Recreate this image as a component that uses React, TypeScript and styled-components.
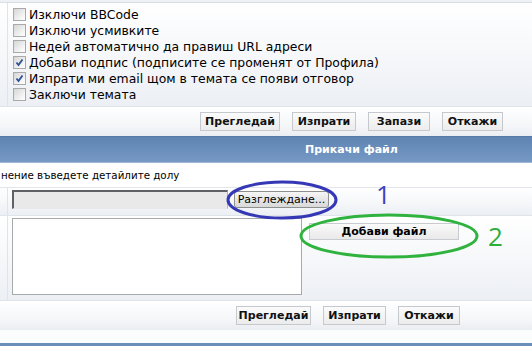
import React from 'react';
import styled, { createGlobalStyle } from 'styled-components';

const GlobalStyle = createGlobalStyle`
  html, body {
    margin: 0;
    padding: 0;
    background: #ffffff;
    overflow: hidden;
  }
  body {
    font-family: Verdana, "DejaVu Sans", sans-serif;
  }
`;

const Page = styled.div`
  position: relative;
  width: 532px;
  height: 346px;
  overflow: hidden;
  display: flex;
  flex-direction: column;
  background: #ffffff;
`;

const TopStrip = styled.div`
  height: 2px;
  background: #eef1f5;
  border-bottom: 1px solid #d9dee6;
`;

const Row = styled.div<{ $height: number }>`
  display: flex;
  height: ${(p) => p.$height}px;
  border-bottom: 1px solid #dfe4ea;
  background: linear-gradient(180deg, #ffffff 0%, #f4f6f9 60%, #eceff4 100%);
`;

const LeftCell = styled.div`
  width: 7px;
  flex: none;
  border-right: 1px solid #dfe4ea;
`;

const OptionsCell = styled.div`
  flex: 1;
  padding: 3px 0 0 5px;
  display: flex;
  flex-direction: column;
`;

const Option = styled.label`
  display: flex;
  align-items: center;
  height: 16px;
  font-size: 12.4px;
  color: #000;
  gap: 3px;
  white-space: nowrap;
`;

const Box = styled.span`
  width: 11px;
  height: 11px;
  flex: none;
  border: 1px solid #a9a9a9;
  background: linear-gradient(135deg, #d6d6d6 0%, #f4f4f4 70%, #ffffff 100%);
  display: flex;
  align-items: center;
  justify-content: center;
`;

const ButtonBar = styled.div<{ $height: number; $gap: number; $right: number }>`
  height: ${(p) => p.$height}px;
  display: flex;
  align-items: center;
  justify-content: flex-end;
  gap: ${(p) => p.$gap}px;
  padding-right: ${(p) => p.$right}px;
  background: linear-gradient(180deg, #ffffff 0%, #f3f5f8 70%, #eaedf1 100%);
`;

const Button = styled.button<{ $width: number }>`
  width: ${(p) => p.$width}px;
  height: 19px;
  padding: 0;
  border: 1px solid #c5c9ce;
  background: linear-gradient(180deg, #fbfbfb 0%, #ececec 100%);
  font-family: Verdana, "DejaVu Sans", sans-serif;
  font-size: 11px;
  font-weight: bold;
  color: #111;
`;

const Header = styled.div`
  height: 25px;
  border-top: 1px solid #557aa8;
  border-bottom: 1px solid #9fb8d6;
  background: linear-gradient(180deg, #5f83b2 0%, #6b8fbd 50%, #7598c4 100%);
  display: flex;
  align-items: center;
  padding-left: 305px;
  color: #ffffff;
  font-size: 11px;
  font-weight: bold;
`;

const Hint = styled.div`
  height: 24px;
  display: flex;
  align-items: center;
  padding-left: 1px;
  font-size: 10.3px;
  color: #000;
  border-bottom: 1px solid #e3e7ec;
  background: #ffffff;
`;

const FieldCell = styled.div`
  flex: 1;
  display: flex;
  align-items: flex-start;
  padding: 2px 0 0 4px;
`;

const FileBox = styled.div`
  width: 213px;
  height: 16px;
  border-top: 2px solid #5e6266;
  border-left: 2px solid #5e6266;
  border-right: 1px solid #b6b6b6;
  border-bottom: 1px solid #e8e8e8;
  background: #e9e9e9;
`;

const BrowseButton = styled.button`
  margin: 1px 0 0 6px;
  width: 95px;
  height: 17px;
  padding: 0;
  border: 1px solid #8e8f8f;
  border-radius: 3px;
  background: linear-gradient(180deg, #f6f6f6 0%, #e6e6e6 50%, #d9d9d9 100%);
  font-family: Verdana, "DejaVu Sans", sans-serif;
  font-size: 11px;
  color: #000;
`;

const ListBox = styled.div`
  width: 288px;
  height: 75px;
  border: 1px solid #a7aaad;
  background: #ffffff;
`;

const AddButton = styled.button`
  margin: 5px 0 0 7px;
  width: 150px;
  height: 17px;
  padding: 0;
  border: 1px solid #c8cbcf;
  background: linear-gradient(180deg, #fafafa 0%, #e9e9e9 100%);
  font-family: Verdana, "DejaVu Sans", sans-serif;
  font-size: 11px;
  font-weight: bold;
  color: #000;
`;

const Footer = styled.div`
  flex: 1;
  background: #fbfcfd;
  border-bottom: 3px solid #6b8ebb;
`;

const Overlay = styled.svg`
  position: absolute;
  left: 0;
  top: 0;
  pointer-events: none;
`;

const Mark = styled.span<{ $x: number; $y: number; $color: string }>`
  position: absolute;
  left: ${(p) => p.$x}px;
  top: ${(p) => p.$y}px;
  color: ${(p) => p.$color};
  font-family: "Open Sans", "DejaVu Sans", sans-serif;
  font-size: 26px;
  line-height: 1;
`;

const Check = () => (
  <svg width="9" height="9" viewBox="0 0 9 9">
    <path d="M1.5 4.5 L3.5 7 L7.5 1.5" fill="none" stroke="#2a4f96" strokeWidth="1.8" />
  </svg>
);

const options = [
  { text: 'Изключи BBCode', checked: false },
  { text: 'Изключи усмивките', checked: false },
  { text: 'Недей автоматично да правиш URL адреси', checked: false },
  { text: 'Добави подпис (подписите се променят от Профила)', checked: true },
  { text: 'Изпрати ми email щом в темата се появи отговор', checked: true },
  { text: 'Заключи темата', checked: false },
];

export default function App() {
  return (
    <>
      <GlobalStyle />
      <Page>
        <TopStrip />
        <Row $height={103}>
          <LeftCell />
          <OptionsCell>
            {options.map((o) => (
              <Option key={o.text}>
                <Box>{o.checked && <Check />}</Box>
                {o.text}
              </Option>
            ))}
          </OptionsCell>
        </Row>
        <ButtonBar $height={29} $gap={12} $right={29}>
          <Button $width={80}>Прегледай</Button>
          <Button $width={64}>Изпрати</Button>
          <Button $width={62}>Запази</Button>
          <Button $width={61}>Откажи</Button>
        </ButtonBar>
        <Header>Прикачи файл</Header>
        <Hint>нение въведете детайлите долу</Hint>
        <Row $height={27}>
          <LeftCell />
          <FieldCell>
            <FileBox />
            <BrowseButton>Разглеждане...</BrowseButton>
          </FieldCell>
        </Row>
        <Row $height={84}>
          <LeftCell />
          <FieldCell>
            <ListBox />
            <AddButton>Добави файл</AddButton>
          </FieldCell>
        </Row>
        <ButtonBar $height={29} $gap={12} $right={72}>
          <Button $width={75}>Прегледай</Button>
          <Button $width={63}>Изпрати</Button>
          <Button $width={62}>Откажи</Button>
        </ButtonBar>
        <Footer />
        <Overlay width="532" height="346">
          <ellipse cx="282" cy="200" rx="54" ry="18" fill="none" stroke="#3438b4" strokeWidth="3" />
          <ellipse cx="389" cy="236" rx="88" ry="21" fill="none" stroke="#2fb33e" strokeWidth="3" />
        </Overlay>
        <Mark $x={376} $y={181} $color="#3b45c0">1</Mark>
        <Mark $x={488} $y={223} $color="#2fae3c">2</Mark>
      </Page>
    </>
  );
}
